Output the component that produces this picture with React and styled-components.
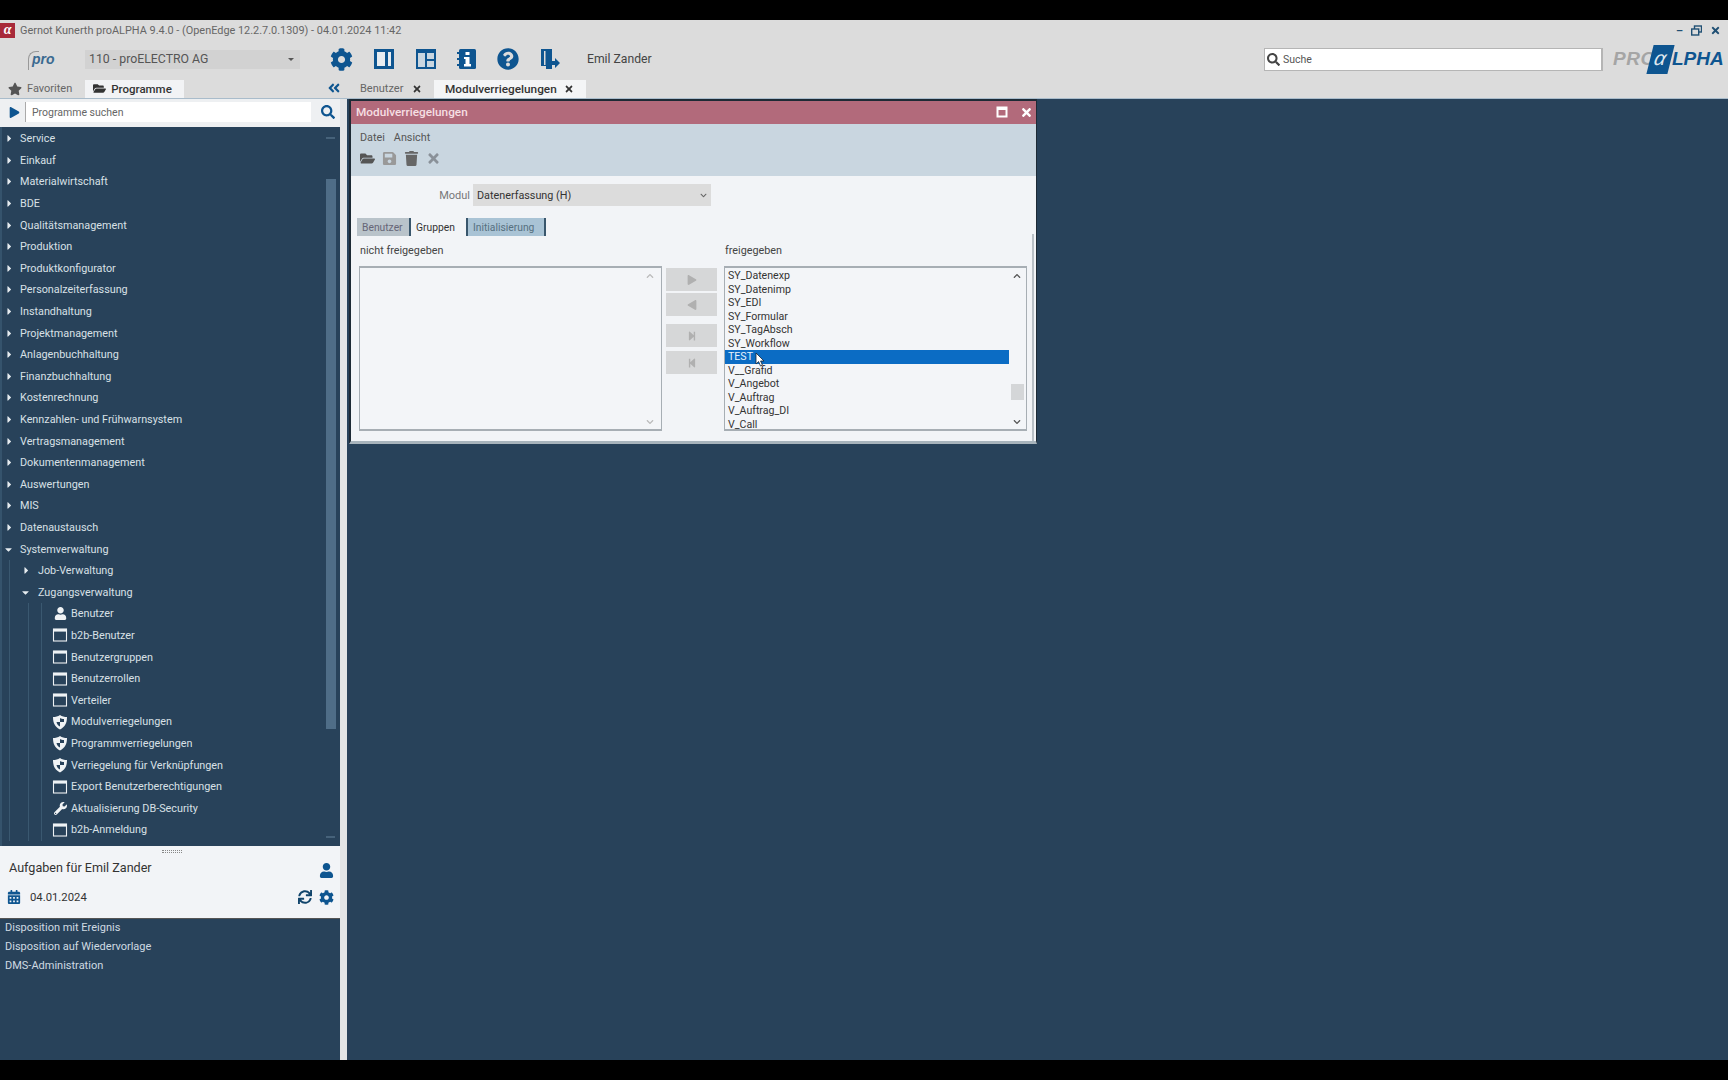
import React from "react";
import styled, { createGlobalStyle } from "styled-components";
import { FaCog, FaQuestionCircle, FaStar, FaSearch, FaPlay, FaFolderOpen, FaSave, FaTrash, FaTimes, FaWrench, FaUser, FaSync, FaCalendarAlt, FaCaretRight, FaCaretDown, FaStepForward, FaStepBackward, FaChevronUp, FaChevronDown, FaAngleDoubleLeft } from "react-icons/fa";

const Global = createGlobalStyle`
  html, body { margin: 0; padding: 0; background: #000; }
  * { box-sizing: border-box; }
  body { font-family: Roboto, "Noto Sans", "Liberation Sans", sans-serif; }
`;

const Page = styled.div`
  width: 1728px; height: 1080px; padding: 20px 0; background: #000; overflow: hidden;
`;
const AppFrame = styled.div`
  height: 1040px; display: flex; flex-direction: column; background: #dcdcdc;
`;
const TitleBar = styled.div`
  height: 20px; flex: none; display: flex; align-items: center; gap: 5px; padding-right: 7px;
  font-size: 10.9px; color: #666;
`;
const AppMark = styled.div`
  width: 15px; height: 15px; background: #a82a3a; color: #fff; font: italic bold 14px/14px "Liberation Serif", serif; text-align: center;
`;
const TitleText = styled.span` flex: 1; white-space: nowrap; `;
const WinCtl = styled.div`
  display: flex; gap: 8px; align-items: center; color: #1f4f73; font-size: 11px; font-weight: 700;
`;
const Toolbar = styled.div`
  height: 38px; flex: none; display: flex; align-items: center; padding-left: 28px; color: #444;
`;
const ProMark = styled.div`
  width: 30px; margin-right: 27px; position: relative; font: italic bold 14px "Liberation Sans", sans-serif; color: #3b6a90; padding-left: 4px;
  &::before { content: ""; position: absolute; left: 0; top: 0; width: 10px; height: 18px; border-left: 1.5px solid #999; border-top: 1.5px solid #999; border-radius: 8px 0 0 0; }
`;
const Combo = styled.div`
  width: 215px; height: 19px; background: #d2d2d2; padding: 0 4px; display: flex; align-items: center; justify-content: space-between; font-size: 12.3px; color: #555;
`;
const Caret = styled.span`
  width: 0; height: 0; border-left: 3px solid transparent; border-right: 3px solid transparent; border-top: 3px solid ${p => p.$c || "#555"}; margin-right: ${p => p.$mr || 2}px;
`;
const IconGroup = styled.div`
  display: flex; align-items: center; gap: 20px; margin-left: 30px; color: #0e5590; svg { display: block; }
`;
const UserName = styled.div` margin-left: 26px; font-size: 12.2px; color: #444; `;
const GlobalSearch = styled.div`
  margin-left: auto; width: 339px; height: 23px; background: #fff; border: 1px solid #b5b5b5; border-right-width: 2px; display: flex; align-items: center; gap: 3px; padding-left: 2px; font-size: 10.5px; color: #555; svg { color: #444; }
`;
const Logo = styled.div`
  width: 125px; flex: none; padding-left: 10px; display: flex; align-items: center; font: italic 700 19px "Liberation Sans", sans-serif; color: #a5a5a5; letter-spacing: 0.6px;
`;
const LogoAlpha = styled.span`
  display: inline-block; background: #0e5590; color: #dfe8ef; width: 21px; height: 29px; line-height: 27px; transform: skewX(-14deg); text-align: center; font-size: 20px; font-weight: 400; margin-left: -6px; flex: none;
`;
const LogoBlue = styled.span` color: #0e5590; letter-spacing: 0; margin-left: 1px; `;
const TabRow = styled.div`
  height: 20px; flex: none; display: flex; align-items: flex-end; font-size: 11px;
`;
const LeftTabs = styled.div` width: 327px; display: flex; align-items: flex-end; padding-left: 8px; `;
const LeftTab = styled.div`
  height: 18px; padding-bottom: 1px; display: flex; align-items: center; gap: 5px; padding-left: ${p => p.$active ? 8 : 0}px; padding-right: 12px; margin-right: ${p => p.$active ? 0 : 1}px;
  background: ${p => p.$active ? "#f2f3f5" : "transparent"}; color: ${p => p.$active ? "#333" : "#666"}; font-weight: ${p => p.$active ? 500 : 400}; font-size: ${p => p.$active ? 11.5 : 11}px;
`;
const CollapseBtn = styled.div` width: 25px; color: #0e5590; font-size: 14px; display: flex; align-self: center; `;
const DocTab = styled.div`
  height: 18px; padding-bottom: 1px; display: flex; align-items: center; justify-content: space-between; padding-left: ${p => p.$pl}px; padding-right: 12px;
  width: ${p => p.$w}px; background: ${p => p.$active ? "#f4f5f6" : "transparent"}; color: ${p => p.$active ? "#333" : "#666"}; font-weight: ${p => p.$active ? 500 : 400}; font-size: ${p => p.$active ? 11.8 : 11}px;
  svg { color: #333; flex: none; }
`;
const Main = styled.div` flex: 1; display: flex; min-height: 0; border-top: 1px solid #a9bccb; `;
const Sidebar = styled.div` width: 340px; flex: none; display: flex; flex-direction: column; background: #f2f3f5; `;
const SideSearch = styled.div`
  height: 28px; padding-bottom: 2px; flex: none; display: flex; align-items: center; padding-left: 9px; padding-right: 5px; color: #0e5590; background: #eef0f2;
`;
const SideInput = styled.div`
  margin-left: 5px; flex: 1; height: 20px; background: #fff; border-left: 1px solid #aaa; display: flex; align-items: center; padding-left: 6px; font-size: 10.5px; color: #666;
`;
const SearchBtn = styled.div` width: 24px; display: flex; justify-content: flex-end; color: #0e5590; font-size: 14px; `;
const TreePane = styled.div`
  flex: 1; min-height: 0; background: #28425a; display: flex; overflow: hidden; border-left: 2px solid #35536c;
`;
const TreeList = styled.div` flex: 1; display: flex; flex-direction: column; padding-top: 1px; `;
const Row = styled.div`
  height: 21.6px; flex: none; display: flex; align-items: center; padding-left: ${p => p.$indent}px; color: #d8e0e6; font-size: 10.8px; white-space: nowrap;
`;
const Arrow = styled.span`
  width: ${p => p.$w || 11}px; flex: none; font-size: 11px; display: flex; color: #e6ecf0;
`;
const Branch = styled.div`
  display: flex; flex-direction: column; margin-left: ${p => p.$ml}px; border-left: 1px solid #3a5870;
`;
const LeafIcon = styled.span` width: 16px; flex: none; display: flex; justify-content: center; margin-right: 3px; color: #f0f3f5; `;
const ScrollTrack = styled.div`
  width: 14px; margin-right: 2px; flex: none; position: relative; padding-top: 52px;
`;
const ScrollThumb = styled.div` height: 550px; background: #4f6d87; width: 10px; margin-left: 2px; `;
const ScrollTick = styled.span`
  position: absolute; left: 2px; width: 9px; height: 2px; background: #46627a; ${p => p.$bottom ? "bottom: 8px" : "top: 10px"};
`;
const Tasks = styled.div` height: 72px; flex: none; background: #f2f4f7; padding: 4px 5px 0 9px; `;
const Grip = styled.div` width: 20px; height: 3px; margin: 0 auto; border-top: 1px dotted #888; border-bottom: 1px dotted #888; `;
const TasksHead = styled.div` display: flex; justify-content: space-between; align-items: flex-end; height: 22px; color: #333; font-size: 12.6px; padding-right: 1px; svg { color: #0e5590; margin-bottom: -3px; } `;
const TasksDate = styled.div` display: flex; align-items: center; gap: 9px; height: 22px; margin-top: 11px; margin-left: -2px; font-size: 11.3px; color: #333; svg { color: #0e5590; } `;
const Spacer = styled.div` flex: 1; `;
const TaskIcons = styled.div` display: flex; gap: 7px; align-items: center; padding-right: 1px; svg { color: #12456c; } `;
const TaskList = styled.div` height: 142px; flex: none; background: #28425a; border-top: 1px solid #555; `;
const TaskItem = styled.div` height: 18.8px; line-height: 17px; padding-left: 5px; color: #cfdae2; font-size: 11px; `;
const Splitter = styled.div` width: 7px; flex: none; background: #e3e5e6; `;
const Desktop = styled.div` flex: 1; background: #28425a; padding-left: 2px; `;
const Win = styled.div`
  width: 688px; height: 345px; background: #f2f4f7; border: 2px solid #1d2a35; border-width: 2px 1px 3px 2px; border-bottom-color: #a8b4bc; display: flex; flex-direction: column;
`;
const WinTitle = styled.div`
  height: 23px; flex: none; background: #b26a7b; display: flex; align-items: center; padding: 0 3px 1px 5px; color: #f6dfe3; font-size: 11.8px; font-weight: 500;
`;
const WinBtns = styled.div` margin-left: auto; display: flex; align-items: center; gap: 12px; color: #fff; svg { display: block; } `;
const Band = styled.div` height: 52px; flex: none; background: #c9d6e0; padding: 3px 9px 0; `;
const Menu = styled.div` display: flex; gap: 9px; height: 20px; align-items: center; font-size: 10.8px; color: #555; `;
const Tools = styled.div` display: flex; align-items: center; gap: 7px; height: 22px; `;
const Tool = styled.span` color: ${p => p.$c}; display: flex; font-size: 15px; `;
const Body = styled.div`
  flex: 1; padding: 8px 11px 0 8px; display: flex; flex-direction: column; min-height: 0; position: relative;
  &::after { content: ""; position: absolute; right: 2px; top: 58px; bottom: 0; width: 2px; background: #b9c0c6; }
`;
const FormRow = styled.div` display: flex; align-items: center; padding-left: 78px; gap: 3px; font-size: 11px; color: #777; `;
const FieldLabel = styled.span` width: 33px; text-align: right; `;
const Select = styled.div` width: 238px; height: 22px; background: #dcdcdc; display: flex; align-items: center; justify-content: space-between; padding: 0 4px; color: #333; font-size: 10.8px; `;
const SubTabs = styled.div` display: flex; align-items: center; height: 18px; margin: 12px 0 0 -2px; font-size: 10.3px; `;
const SubTab = styled.div`
  height: 18px; padding: 0 5px; width: ${p => p.$w}px; display: flex; align-items: center; white-space: nowrap;
  background: ${p => p.$bg || "transparent"}; color: ${p => p.$c || "#555"}; border-right: ${p => p.$rule ? "2px solid #39566c" : "none"}; border-left: ${p => p.$ruleL ? "2px solid #39566c" : "none"};
`;
const Columns = styled.div` display: grid; grid-template-columns: 303px 62px 303px; font-size: 10.8px; color: #444; `;
const ColLabel = styled.div` height: 30px; padding: 8px 0 0 1px; `;
const ListBox = styled.div`
  height: 165px; border: 1px solid #a7aeb4; border-top-width: 2px; border-bottom-width: 2px; background: #f3f5f8; position: relative; overflow: hidden; padding-top: ${p => p.$pt || 0}px; color: #333;
`;
const ListRow = styled.div`
  height: 13.5px; line-height: 13.5px; font-size: 10.6px; padding-left: 3px; width: 284px; white-space: nowrap;
  background: ${p => p.$sel ? "#0b6cc4" : "transparent"}; color: ${p => p.$sel ? "#e8f2fb" : "#333"};
`;
const ScrollGlyph = styled.span`
  position: absolute; right: ${p => p.$r}px; ${p => p.$bottom ? "bottom: 3px" : "top: 4px"}; font-size: 8px; color: ${p => p.$c || "#555"}; display: flex;
`;
const ListThumb = styled.div` position: absolute; right: 2px; top: 116px; width: 13px; height: 16px; background: #d4d6d8; `;
const Pointer = styled.svg` position: absolute; left: 30px; top: 84px; `;
const Moves = styled.div` display: flex; flex-direction: column; padding: 2px 0 0 4px; gap: 2px; `;
const MoveBtn = styled.div` width: 51px; height: 23px; background: #d6d7d8; color: #b0b0b0; margin-top: ${p => p.$mt || 0}px; display: flex; align-items: center; justify-content: center; font-size: 10px; svg { transform: ${p => p.$flip ? "scaleX(-1)" : "none"}; } `;

const WindowIcon = () => (
  <svg width="16" height="16" viewBox="0 0 16 16"><rect x="1.5" y="2" width="13" height="12" fill="none" stroke="#eef2f5" strokeWidth="1.1" /><rect x="1.5" y="2" width="13" height="2.6" fill="#eef2f5" /></svg>
);
const ShieldIcon = () => (
  <svg width="16" height="16" viewBox="0 0 16 16"><path d="M8 1 C10 2.5 12.5 3 15 3 C15 9 13 13 8 15.5 C3 13 1 9 1 3 C3.5 3 6 2.5 8 1Z" fill="#f0f3f5" /><path d="M8 4 L8 8 L12 8 C12 6 12 5 12 5 C10.5 5 9 4.6 8 4Z M8 8 L4.5 8 C5 10 6 11.5 8 12.5Z" fill="#28425a" /></svg>
);
const PanelA = () => (
  <svg width="22" height="22" viewBox="0 0 22 22"><rect x="1" y="1" width="20" height="20" fill="#0e5590" /><rect x="4" y="4" width="8" height="14" fill="#e8edf1" /><rect x="15" y="4" width="3" height="14" fill="#e8edf1" /></svg>
);
const PanelB = () => (
  <svg width="22" height="22" viewBox="0 0 22 22"><rect x="1" y="1" width="20" height="20" fill="#0e5590" /><rect x="3" y="5" width="7" height="14" fill="#c9d6e0" /><rect x="12" y="5" width="7" height="6" fill="#c9d6e0" /><rect x="12" y="13" width="7" height="6" fill="#c9d6e0" /></svg>
);
const InfoBook = () => (
  <svg width="20" height="22" viewBox="0 0 20 22"><rect x="2" y="1" width="17" height="20" rx="1.5" fill="#0e5590" /><rect x="0" y="4" width="4" height="2" fill="#0e5590" /><rect x="0" y="10" width="4" height="2" fill="#0e5590" /><rect x="0" y="16" width="4" height="2" fill="#0e5590" /><rect x="8.5" y="4" width="4" height="3" fill="#fff" /><path d="M7 9 H12.5 V16 H14 V18.5 H7 V16 H8.5 V11 H7Z" fill="#fff" /></svg>
);
const ExitDoor = () => (
  <svg width="22" height="22" viewBox="0 0 22 22"><path d="M2 1 H13 V21 H7 V18 H2Z" fill="#0e5590" /><rect x="5" y="3" width="1.5" height="14" fill="#dcdcdc" /><path d="M13 13 H16 V10 L21 15 L16 20 V17 H13Z" fill="#0e5590" /></svg>
);
const Maximize = () => (
  <svg width="12" height="12" viewBox="0 0 12 12"><rect x="1.5" y="1.5" width="9" height="9" fill="none" stroke="#fff" strokeWidth="2" /><rect x="1" y="1" width="10" height="3" fill="#fff" /></svg>
);
const RestoreGlyph = () => (
  <svg width="11" height="11" viewBox="0 0 11 11"><rect x="3.5" y="1" width="7" height="6" fill="none" stroke="#1f4f73" strokeWidth="1.4" /><rect x="0.7" y="4" width="7" height="6" fill="#dcdcdc" stroke="#1f4f73" strokeWidth="1.4" /></svg>
);

const topLevel = ["Service", "Einkauf", "Materialwirtschaft", "BDE", "Qualitätsmanagement", "Produktion", "Produktkonfigurator", "Personalzeiterfassung", "Instandhaltung", "Projektmanagement", "Anlagenbuchhaltung", "Finanzbuchhaltung", "Kostenrechnung", "Kennzahlen- und Frühwarnsystem", "Vertragsmanagement", "Dokumentenmanagement", "Auswertungen", "MIS", "Datenaustausch"];
const leaves = [
  ["Benutzer", <FaUser size={13} />],
  ["b2b-Benutzer", <WindowIcon />],
  ["Benutzergruppen", <WindowIcon />],
  ["Benutzerrollen", <WindowIcon />],
  ["Verteiler", <WindowIcon />],
  ["Modulverriegelungen", <ShieldIcon />],
  ["Programmverriegelungen", <ShieldIcon />],
  ["Verriegelung für Verknüpfungen", <ShieldIcon />],
  ["Export Benutzerberechtigungen", <WindowIcon />],
  ["Aktualisierung DB-Security", <FaWrench size={13} />],
  ["b2b-Anmeldung", <WindowIcon />],
];
const granted = ["SY_Datenexp", "SY_Datenimp", "SY_EDI", "SY_Formular", "SY_TagAbsch", "SY_Workflow", "TEST", "V__Grafid", "V_Angebot", "V_Auftrag", "V_Auftrag_DI", "V_Call"];
const tasks = ["Disposition mit Ereignis", "Disposition auf Wiedervorlage", "DMS-Administration"];

export default function App() {
  return (
    <Page>
      <Global />
      <AppFrame>
        <TitleBar>
          <AppMark>α</AppMark>
          <TitleText>Gernot Kunerth proALPHA 9.4.0 - (OpenEdge 12.2.7.0.1309) - 04.01.2024 11:42</TitleText>
          <WinCtl><span>–</span><RestoreGlyph /><FaTimes size={11} /></WinCtl>
        </TitleBar>
        <Toolbar>
          <ProMark>pro</ProMark>
          <Combo>110 - proELECTRO AG<Caret /></Combo>
          <IconGroup>
            <FaCog size={23} />
            <PanelA />
            <PanelB />
            <InfoBook />
            <FaQuestionCircle size={22} />
            <ExitDoor />
          </IconGroup>
          <UserName>Emil Zander</UserName>
          <GlobalSearch><FaSearch size={13} />Suche</GlobalSearch>
          <Logo>PRO<LogoAlpha>α</LogoAlpha><LogoBlue>LPHA</LogoBlue></Logo>
        </Toolbar>
        <TabRow>
          <LeftTabs>
            <LeftTab><FaStar size={14} color="#555" />Favoriten</LeftTab>
            <LeftTab $active><FaFolderOpen size={13} color="#333" />Programme</LeftTab>
          </LeftTabs>
          <CollapseBtn><FaAngleDoubleLeft /></CollapseBtn>
          <DocTab $w={82} $pl={8}>Benutzer<FaTimes size={10} /></DocTab>
          <DocTab $w={152} $pl={11} $active>Modulverriegelungen<FaTimes size={10} /></DocTab>
        </TabRow>
        <Main>
          <Sidebar>
            <SideSearch>
              <FaPlay size={11} />
              <SideInput>Programme suchen</SideInput>
              <SearchBtn><FaSearch /></SearchBtn>
            </SideSearch>
            <TreePane>
              <TreeList>
                {topLevel.map(t => (
                  <Row key={t} $indent={2}><Arrow $w={16}><FaCaretRight /></Arrow>{t}</Row>
                ))}
                <Row $indent={1}><Arrow $w={17}><FaCaretDown /></Arrow>Systemverwaltung</Row>
                <Branch $ml={7}>
                  <Row $indent={11}><Arrow $w={17}><FaCaretRight /></Arrow>Job-Verwaltung</Row>
                  <Row $indent={10}><Arrow $w={18}><FaCaretDown /></Arrow>Zugangsverwaltung</Row>
                  <Branch $ml={18}>
                    <Branch $ml={12}>
                      {leaves.map(([label, icon]) => (
                        <Row key={label} $indent={10}><LeafIcon>{icon}</LeafIcon>{label}</Row>
                      ))}
                    </Branch>
                  </Branch>
                </Branch>
              </TreeList>
              <ScrollTrack><ScrollTick /><ScrollThumb /><ScrollTick $bottom /></ScrollTrack>
            </TreePane>
            <Tasks>
              <Grip />
              <TasksHead>Aufgaben für Emil Zander<FaUser size={15} /></TasksHead>
              <TasksDate>
                <FaCalendarAlt size={14} />04.01.2024<Spacer />
                <TaskIcons><FaSync size={14} /><FaCog size={15} color="#0e5590" /></TaskIcons>
              </TasksDate>
            </Tasks>
            <TaskList>
              {tasks.map(t => <TaskItem key={t}>{t}</TaskItem>)}
            </TaskList>
          </Sidebar>
          <Splitter />
          <Desktop>
            <Win>
              <WinTitle>
                Modulverriegelungen
                <WinBtns><Maximize /><FaTimes size={13} /></WinBtns>
              </WinTitle>
              <Band>
                <Menu><span>Datei</span><span>Ansicht</span></Menu>
                <Tools>
                  <Tool $c="#555"><FaFolderOpen /></Tool>
                  <Tool $c="#999"><FaSave /></Tool>
                  <Tool $c="#666"><FaTrash /></Tool>
                  <Tool $c="#8a9199"><FaTimes /></Tool>
                </Tools>
              </Band>
              <Body>
                <FormRow>
                  <FieldLabel>Modul</FieldLabel>
                  <Select>Datenerfassung (H)<FaChevronDown size={7} color="#666" /></Select>
                </FormRow>
                <SubTabs>
                  <SubTab $w={54} $bg="#b9c3ca" $c="#667" $rule>Benutzer</SubTab>
                  <SubTab $w={55} $c="#333">Gruppen</SubTab>
                  <SubTab $w={80} $bg="#a9c3d5" $c="#56707f" $rule $ruleL>Initialisierung</SubTab>
                </SubTabs>
                <Columns>
                  <ColLabel>nicht freigegeben</ColLabel>
                  <div />
                  <ColLabel>freigegeben</ColLabel>
                  <ListBox>
                    <ScrollGlyph $r={7} $c="#bbb"><FaChevronUp /></ScrollGlyph>
                    <ScrollGlyph $r={7} $c="#bbb" $bottom><FaChevronDown /></ScrollGlyph>
                  </ListBox>
                  <Moves>
                    <MoveBtn><FaPlay /></MoveBtn>
                    <MoveBtn $flip><FaPlay /></MoveBtn>
                    <MoveBtn $mt={6}><FaStepForward /></MoveBtn>
                    <MoveBtn $mt={2}><FaStepBackward /></MoveBtn>
                  </Moves>
                  <ListBox $pt={1}>
                    {granted.map(g => <ListRow key={g} $sel={g === "TEST"}>{g}</ListRow>)}
                    <ScrollGlyph $r={5}><FaChevronUp /></ScrollGlyph>
                    <ScrollGlyph $r={5} $bottom><FaChevronDown /></ScrollGlyph>
                    <ListThumb />
                    <Pointer width="10" height="15" viewBox="0 0 10 15"><path d="M1 1 V12 L3.6 9.6 L5.5 14 L7.4 13 L5.6 9 H9Z" fill="#fff" stroke="#123" strokeWidth="0.8" /></Pointer>
                  </ListBox>
                </Columns>
              </Body>
            </Win>
          </Desktop>
        </Main>
      </AppFrame>
    </Page>
  );
}
